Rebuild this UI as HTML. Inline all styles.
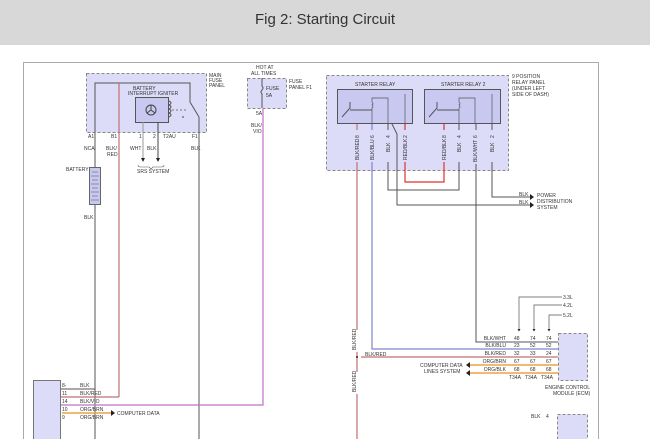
<!DOCTYPE html>
<html><head><meta charset="utf-8"><style>
html,body{margin:0;padding:0;background:#fff;width:650px;height:439px;overflow:hidden}
.hdr{position:absolute;left:0;top:0;width:650px;height:45px;background:#d8d8d8;text-align:center;font:15px "Liberation Sans",sans-serif;line-height:40px;color:#333}
svg{position:absolute;left:0;top:0}
text{font-family:"Liberation Sans",sans-serif;font-size:5px;fill:#333}
</style></head><body>
<div class="hdr">Fig 2: Starting Circuit</div>
<svg width="650" height="439" viewBox="0 0 650 439">
<path d="M23.5 439V62.5H598.5V439" fill="none" stroke="#aaa" stroke-width="1"/>
<rect x="86.5" y="73.5" width="120" height="59" fill="#dcdcf8" stroke="#888" stroke-dasharray="3,2"/>
<text x="209" y="77">MAIN</text><text x="209" y="82">FUSE</text><text x="209" y="87">PANEL</text>
<polyline points="95,439 95,83 190,83 190,102" fill="none" stroke="#555" stroke-width="1"/>
<line x1="119" y1="83" x2="119" y2="397" stroke="#c07070" stroke-width="1.2"/>
<line x1="190" y1="102" x2="199" y2="117" stroke="#555"/>
<line x1="199" y1="117" x2="199" y2="439" stroke="#555"/>
<text x="133" y="90">BATTERY</text><text x="128" y="95">INTERRUPT IGNITER</text>
<rect x="135.5" y="97.5" width="33" height="25" fill="#c8c8f0" stroke="#555"/>
<circle cx="151" cy="110" r="5" fill="none" stroke="#444"/>
<path d="M151 105v5l-4 3M151 110l4 3" stroke="#444" fill="none"/>
<path d="M169 101q4 2 0 4q4 2 0 4q4 2 0 4q4 2 0 4" stroke="#555" fill="none"/>
<line x1="172" y1="110" x2="188" y2="110" stroke="#777" stroke-dasharray="2,2"/>
<circle cx="183" cy="117" r="0.8" fill="#333"/>
<line x1="143" y1="122" x2="143" y2="158" stroke="#999"/>
<line x1="158" y1="122" x2="158" y2="158" stroke="#444"/>
<path d="M141 158h4l-2 4z M156 158h4l-2 4z" fill="#222"/>
<path d="M138 165q0 2 3 2h8l2 2l2-2h8q3 0 3-2" stroke="#555" fill="none" stroke-width=".6"/>
<text x="137" y="173">SRS SYSTEM</text>
<text x="88" y="138">A1</text><text x="111" y="138">B1</text><text x="139" y="138">1</text><text x="153" y="138">2</text><text x="163" y="138">T2AU</text><text x="192" y="138">F1</text>
<text x="84" y="150">NCA</text><text x="106" y="150">BLK/</text><text x="107" y="156">RED</text><text x="130" y="150">WHT</text><text x="147" y="150">BLK</text><text x="191" y="150">BLK</text>
<rect x="89.5" y="167.5" width="11" height="37" fill="#c8c8f0" stroke="#666"/>
<path d="M92 172h6M91 176h8M92 180h6M91 184h8M92 188h6M91 192h8M92 196h6M91 200h8" stroke="#555" stroke-width=".6"/>
<text x="66" y="171">BATTERY</text><text x="84" y="219">BLK</text>
<text x="256" y="69">HOT AT</text><text x="251" y="75">ALL TIMES</text>
<rect x="247.5" y="78.5" width="39" height="30" fill="#dcdcf8" stroke="#888" stroke-dasharray="3,2"/>
<path d="M262 78v8q2 2 0 4q-2 2 0 4v14" stroke="#555" fill="none"/>
<text x="266" y="90">FUSE</text><text x="266" y="97">5A</text>
<text x="289" y="83">FUSE</text><text x="289" y="89">PANEL F1</text>
<text x="256" y="115">5A</text><text x="251" y="127">BLK/</text><text x="253" y="133">VIO</text>
<polyline points="263,108 263,405 50,405" fill="none" stroke="#c070c8" stroke-width="1.2"/>
<polyline points="95,389 50,389" fill="none" stroke="#555"/>
<polyline points="119,397 50,397" fill="none" stroke="#c07070" stroke-width="1.2"/>
<rect x="33.5" y="380.5" width="27" height="60" fill="#dcdcf8" stroke="#777"/>
<text x="62" y="387">8-</text><text x="80" y="387">BLK</text>
<text x="62" y="395">11</text><text x="80" y="395">BLK/RED</text>
<text x="62" y="403">14</text><text x="80" y="403">BLK/VIO</text>
<text x="62" y="411">10</text><text x="80" y="411">ORG/BRN</text>
<line x1="62" y1="413" x2="111" y2="413" stroke="#f0a040" stroke-width="1.5"/>
<path d="M111 410v6l4-3z" fill="#222"/>
<text x="117" y="415">COMPUTER DATA</text>
<text x="62" y="419">9</text><text x="80" y="419">ORG/BRN</text>
<rect x="326.5" y="75.5" width="182" height="95" fill="#dcdcf8" stroke="#888" stroke-dasharray="3,2"/>
<text x="512" y="78">9 POSITION</text><text x="512" y="84">RELAY PANEL</text><text x="512" y="90">(UNDER LEFT</text><text x="512" y="96">SIDE OF DASH)</text>
<text x="355" y="86">STARTER RELAY</text><text x="441" y="86">STARTER RELAY 2</text>
<rect x="337.5" y="89.5" width="75" height="34" fill="#c8c8f0" stroke="#555"/>
<rect x="424.5" y="89.5" width="76" height="34" fill="#c8c8f0" stroke="#555"/>
<path d="M342 117l8-9v-6M350 110h22" stroke="#555" fill="none"/>
<path d="M429 117l8-9v-6M437 110h22" stroke="#555" fill="none"/>
<path d="M372 124v-16q2-1 0-3q2-1 0-3v-4h16v26M405 124v-30" stroke="#555" fill="none" stroke-width=".7"/>
<path d="M459 124v-16q2-1 0-3q2-1 0-3v-4h16v26M492 124v-30" stroke="#555" fill="none" stroke-width=".7"/>
<line x1="357" y1="124" x2="357" y2="439" stroke="#c07070" stroke-width="1.2"/>
<polyline points="372,124 372,349 558,349" fill="none" stroke="#8080d0" stroke-width="1.2"/>
<polyline points="388,124 388,190 459,190 459,124" fill="none" stroke="#555"/>
<polyline points="405,124 405,182 444,182 444,124" fill="none" stroke="#e03030" stroke-width="1.2"/>
<polyline points="392,124 397,134 397,205 530,205" fill="none" stroke="#555"/>
<polyline points="492,124 492,197 530,197" fill="none" stroke="#555"/>
<polyline points="476,124 476,342 558,342" fill="none" stroke="#555"/>
<g transform="rotate(-90)">
<rect x="-162" y="352" width="32" height="8" fill="#dcdcf8"/><rect x="-162" y="368" width="32" height="8" fill="#dcdcf8"/>
<rect x="-162" y="384" width="32" height="8" fill="#dcdcf8"/><rect x="-162" y="401" width="32" height="8" fill="#dcdcf8"/>
<rect x="-162" y="440" width="32" height="8" fill="#dcdcf8"/><rect x="-162" y="455" width="32" height="8" fill="#dcdcf8"/>
<rect x="-164" y="471" width="34" height="8" fill="#dcdcf8"/><rect x="-162" y="488" width="32" height="8" fill="#dcdcf8"/>
<rect x="-352" y="350" width="22" height="8" fill="#fff"/><rect x="-394" y="350" width="22" height="8" fill="#fff"/>
<text x="-138" y="359">8</text><text x="-160" y="359">BLK/RED</text>
<text x="-138" y="374">6</text><text x="-160" y="374">BLK/BLU</text>
<text x="-138" y="390">4</text><text x="-152" y="390">BLK</text>
<text x="-138" y="407">2</text><text x="-160" y="407">RED/BLK</text>
<text x="-138" y="446">8</text><text x="-160" y="446">RED/BLK</text>
<text x="-138" y="461">4</text><text x="-152" y="461">BLK</text>
<text x="-138" y="477">6</text><text x="-162" y="477">BLK/WHT</text>
<text x="-138" y="494">2</text><text x="-152" y="494">BLK</text>
<text x="-350" y="356">BLK/RED</text><text x="-392" y="356">BLK/RED</text>
</g>
<path d="M530 194v6l4-3zM530 202v6l4-3z" fill="#222"/>
<text x="519" y="196">BLK</text><text x="519" y="204">BLK</text>
<text x="537" y="197">POWER</text><text x="537" y="203">DISTRIBUTION</text><text x="537" y="209">SYSTEM</text>
<line x1="361" y1="357" x2="558" y2="357" stroke="#c07070" stroke-width="1.2"/>
<circle cx="357" cy="357" r="1" fill="#222"/>
<line x1="470" y1="365" x2="558" y2="365" stroke="#f0a040" stroke-width="1.5"/>
<line x1="470" y1="373" x2="558" y2="373" stroke="#f0a040" stroke-width="1.5"/>
<path d="M470 362v6l-4-3zM470 370v6l-4-3z" fill="#222"/>
<text x="420" y="367">COMPUTER DATA</text><text x="424" y="373">LINES SYSTEM</text>
<text x="365" y="356">BLK/RED</text>
<g text-anchor="end"><text x="506" y="340">BLK/WHT</text><text x="506" y="347">BLK/BLU</text><text x="506" y="355">BLK/RED</text><text x="506" y="363">ORG/BRN</text><text x="506" y="371">ORG/BLK</text></g>
<text x="514" y="340">48</text><text x="530" y="340">74</text><text x="546" y="340">74</text>
<text x="514" y="347">23</text><text x="530" y="347">52</text><text x="546" y="347">52</text>
<text x="514" y="355">32</text><text x="530" y="355">33</text><text x="546" y="355">24</text>
<text x="514" y="363">67</text><text x="530" y="363">67</text><text x="546" y="363">67</text>
<text x="514" y="371">68</text><text x="530" y="371">68</text><text x="546" y="371">68</text>
<text x="509" y="379">T34A</text><text x="525" y="379">T34A</text><text x="541" y="379">T34A</text>
<polyline points="562,297 519,297 519,330" fill="none" stroke="#555" stroke-width=".7"/>
<polyline points="562,305 534,305 534,330" fill="none" stroke="#555" stroke-width=".7"/>
<polyline points="562,315 549,315 549,330" fill="none" stroke="#555" stroke-width=".7"/>
<path d="M517.5 329h3l-1.5 2.5zM532.5 329h3l-1.5 2.5zM547.5 329h3l-1.5 2.5z" fill="#222"/>
<text x="563" y="299">3.3L</text><text x="563" y="307">4.2L</text><text x="563" y="317">5.2L</text>
<rect x="558.5" y="333.5" width="29" height="47" fill="#dcdcf8" stroke="#888" stroke-dasharray="3,2"/>
<text x="545" y="389">ENGINE CONTROL</text><text x="553" y="395">MODULE (ECM)</text>
<text x="531" y="418">BLK</text><text x="546" y="418">4</text>
<rect x="557.5" y="414.5" width="30" height="30" fill="#dcdcf8" stroke="#888" stroke-dasharray="3,2"/>
</svg>
</body></html>
